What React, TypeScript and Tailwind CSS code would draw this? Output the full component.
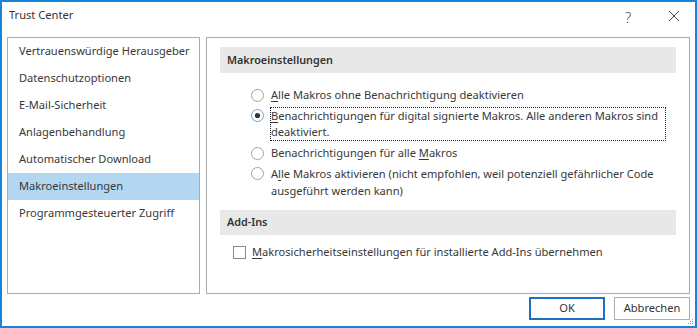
import React from "react";

const font = { fontFamily: '"Noto Sans", "Open Sans", sans-serif' };

function Radio({ checked }: { checked?: boolean }) {
  return (
    <svg width="13" height="13" viewBox="0 0 13 13" className="shrink-0">
      <circle cx="6.5" cy="6.5" r="6" fill="#fff" stroke={checked ? "#7a9cc4" : "#a2a2a2"} strokeWidth="1" />
      {checked && <circle cx="6.5" cy="6.5" r="2.6" fill="#333" />}
    </svg>
  );
}

const U = ({ children }: { children: React.ReactNode }) => <span className="underline underline-offset-2">{children}</span>;

export default function App() {
  const items = [
    "Vertrauenswürdige Herausgeber",
    "Datenschutzoptionen",
    "E-Mail-Sicherheit",
    "Anlagenbehandlung",
    "Automatischer Download",
    "Makroeinstellungen",
    "Programmgesteuerter Zugriff",
  ];
  return (
    <div className="w-[697px] h-[328px] border-2 border-[#1883d7] bg-white flex flex-col text-[11.1px] text-[#383838] relative" style={font}>
      <div className="h-[26px] flex items-center pl-[7px] relative shrink-0">
        <span className="text-[#333]">Trust Center</span>
        <span className="absolute left-[623px] top-[4px] text-[15px] text-[#555] font-light">?</span>
        <svg className="absolute left-[666px] top-[8px]" width="12" height="12" viewBox="0 0 12 12">
          <path d="M1 1 L11 11 M11 1 L1 11" stroke="#444" strokeWidth="1" />
        </svg>
      </div>
      <div className="flex gap-[6px] px-[5px] mt-[9px] shrink-0">
        <div className="w-[193px] h-[257px] border border-[#ababab] flex flex-col">
          {items.map((t, i) => (
            <div key={t} className={`h-[27px] flex items-center pl-[11px] whitespace-nowrap ${i === 5 ? "bg-[#b3d7f1]" : ""}`}>
              {t}
            </div>
          ))}
        </div>
        <div className="w-[484px] h-[257px] border border-[#ababab] pt-[9px] px-[13px] flex flex-col">
          <div className="h-[26px] bg-[#e8e8e8] flex items-center pl-[7px] font-semibold text-[10.8px] text-[#333]">Makroeinstellungen</div>
          <div className="flex flex-col pl-[31px] pt-[14px] gap-[4px]">
            <div className="flex items-center gap-[7px] h-[16px] leading-[16px]">
              <Radio />
              <span className="whitespace-nowrap"><U>A</U>lle Makros ohne Benachrichtigung deaktivieren</span>
            </div>
            <div className="flex items-start gap-[6px]">
              <div className="pt-[2px]"><Radio checked /></div>
              <span className="whitespace-nowrap leading-[16px] border border-dotted border-[#222] pr-[7px]">
                <U>B</U>enachrichtigungen für digital signierte Makros. Alle anderen Makros sind<br />deaktiviert.
              </span>
            </div>
            <div className="flex items-center gap-[7px] h-[16px] leading-[16px]">
              <Radio />
              <span className="whitespace-nowrap">Benachrichtigungen für alle <U>M</U>akros</span>
            </div>
            <div className="flex items-start gap-[7px]">
              <div className="pt-[2px]"><Radio /></div>
              <span className="whitespace-nowrap leading-[17px]">
                A<U>l</U>le Makros aktivieren (nicht empfohlen, weil potenziell gefährlicher Code<br />ausgeführt werden kann)
              </span>
            </div>
          </div>
          <div className="h-[25px] bg-[#e8e8e8] flex items-center pl-[7px] font-semibold text-[10.8px] text-[#333] mt-[11px]">Add-Ins</div>
          <div className="flex items-center gap-[6px] pl-[13px] mt-[9px]">
            <div className="w-[13px] h-[13px] border border-[#8a8a8a] bg-white shrink-0" />
            <span className="whitespace-nowrap"><U>M</U>akrosicherheitseinstellungen für installierte Add-Ins übernehmen</span>
          </div>
        </div>
      </div>
      <div className="flex justify-end gap-[9px] pr-[5px] mt-[3px]">
        <button className="w-[76px] h-[23px] border-2 border-[#1e6fc3] bg-white text-[#333] flex items-center justify-center">OK</button>
        <button className="w-[76px] h-[23px] border border-[#adadad] bg-white text-[#333] flex items-center justify-center">Abbrechen</button>
      </div>
      <svg className="absolute right-[1px] bottom-[1px]" width="6" height="6" viewBox="0 0 6 6">
        <rect x="4" y="0" width="1" height="1" fill="#999" />
        <rect x="2" y="2" width="1" height="1" fill="#999" />
        <rect x="4" y="2" width="1" height="1" fill="#999" />
        <rect x="0" y="4" width="1" height="1" fill="#999" />
        <rect x="2" y="4" width="1" height="1" fill="#999" />
        <rect x="4" y="4" width="1" height="1" fill="#999" />
      </svg>
    </div>
  );
}
